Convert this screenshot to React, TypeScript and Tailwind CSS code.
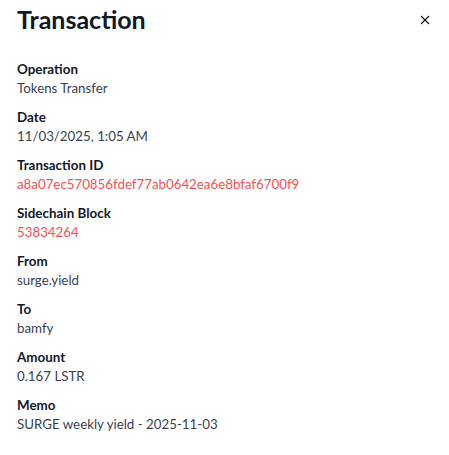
import React from "react";

const rows: { label: string; value: string; red?: boolean }[] = [
  { label: "Operation", value: "Tokens Transfer" },
  { label: "Date", value: "11/03/2025, 1:05 AM" },
  { label: "Transaction ID", value: "a8a07ec570856fdef77ab0642ea6e8bfaf6700f9", red: true },
  { label: "Sidechain Block", value: "53834264", red: true },
  { label: "From", value: "surge.yield" },
  { label: "To", value: "bamfy" },
  { label: "Amount", value: "0.167 LSTR" },
  { label: "Memo", value: "SURGE weekly yield - 2025-11-03" },
];

export default function App() {
  return (
    <div className="w-[449px] h-[455px] bg-white pl-[17px] pr-4" style={{ fontFamily: "Lato, 'Noto Sans', sans-serif" }}>
      <div className="flex items-start justify-between pt-[3px]">
        <h1 className="text-[25px] leading-[32px] font-bold text-[#111827]">Transaction</h1>
        <button className="mt-[10px] mr-[1px] w-[14px] h-[14px] flex items-center justify-center text-[#111]">
          <svg width="10" height="10" viewBox="0 0 10 10" fill="none" stroke="currentColor" strokeWidth="1.1">
            <path d="M1 1 L9 9 M9 1 L1 9" />
          </svg>
        </button>
      </div>
      <div className="mt-[25px] flex flex-col gap-[10px]">
        {rows.map((r) => (
          <div key={r.label} className="flex flex-col">
            <div className="text-[13.4px] leading-[19px] font-bold text-[#111827]">{r.label}</div>
            <div className={"text-[13.3px] leading-[19px] " + (r.red ? "text-[#f05252]" : "text-[#374151]")}>{r.value}</div>
          </div>
        ))}
      </div>
    </div>
  );
}
